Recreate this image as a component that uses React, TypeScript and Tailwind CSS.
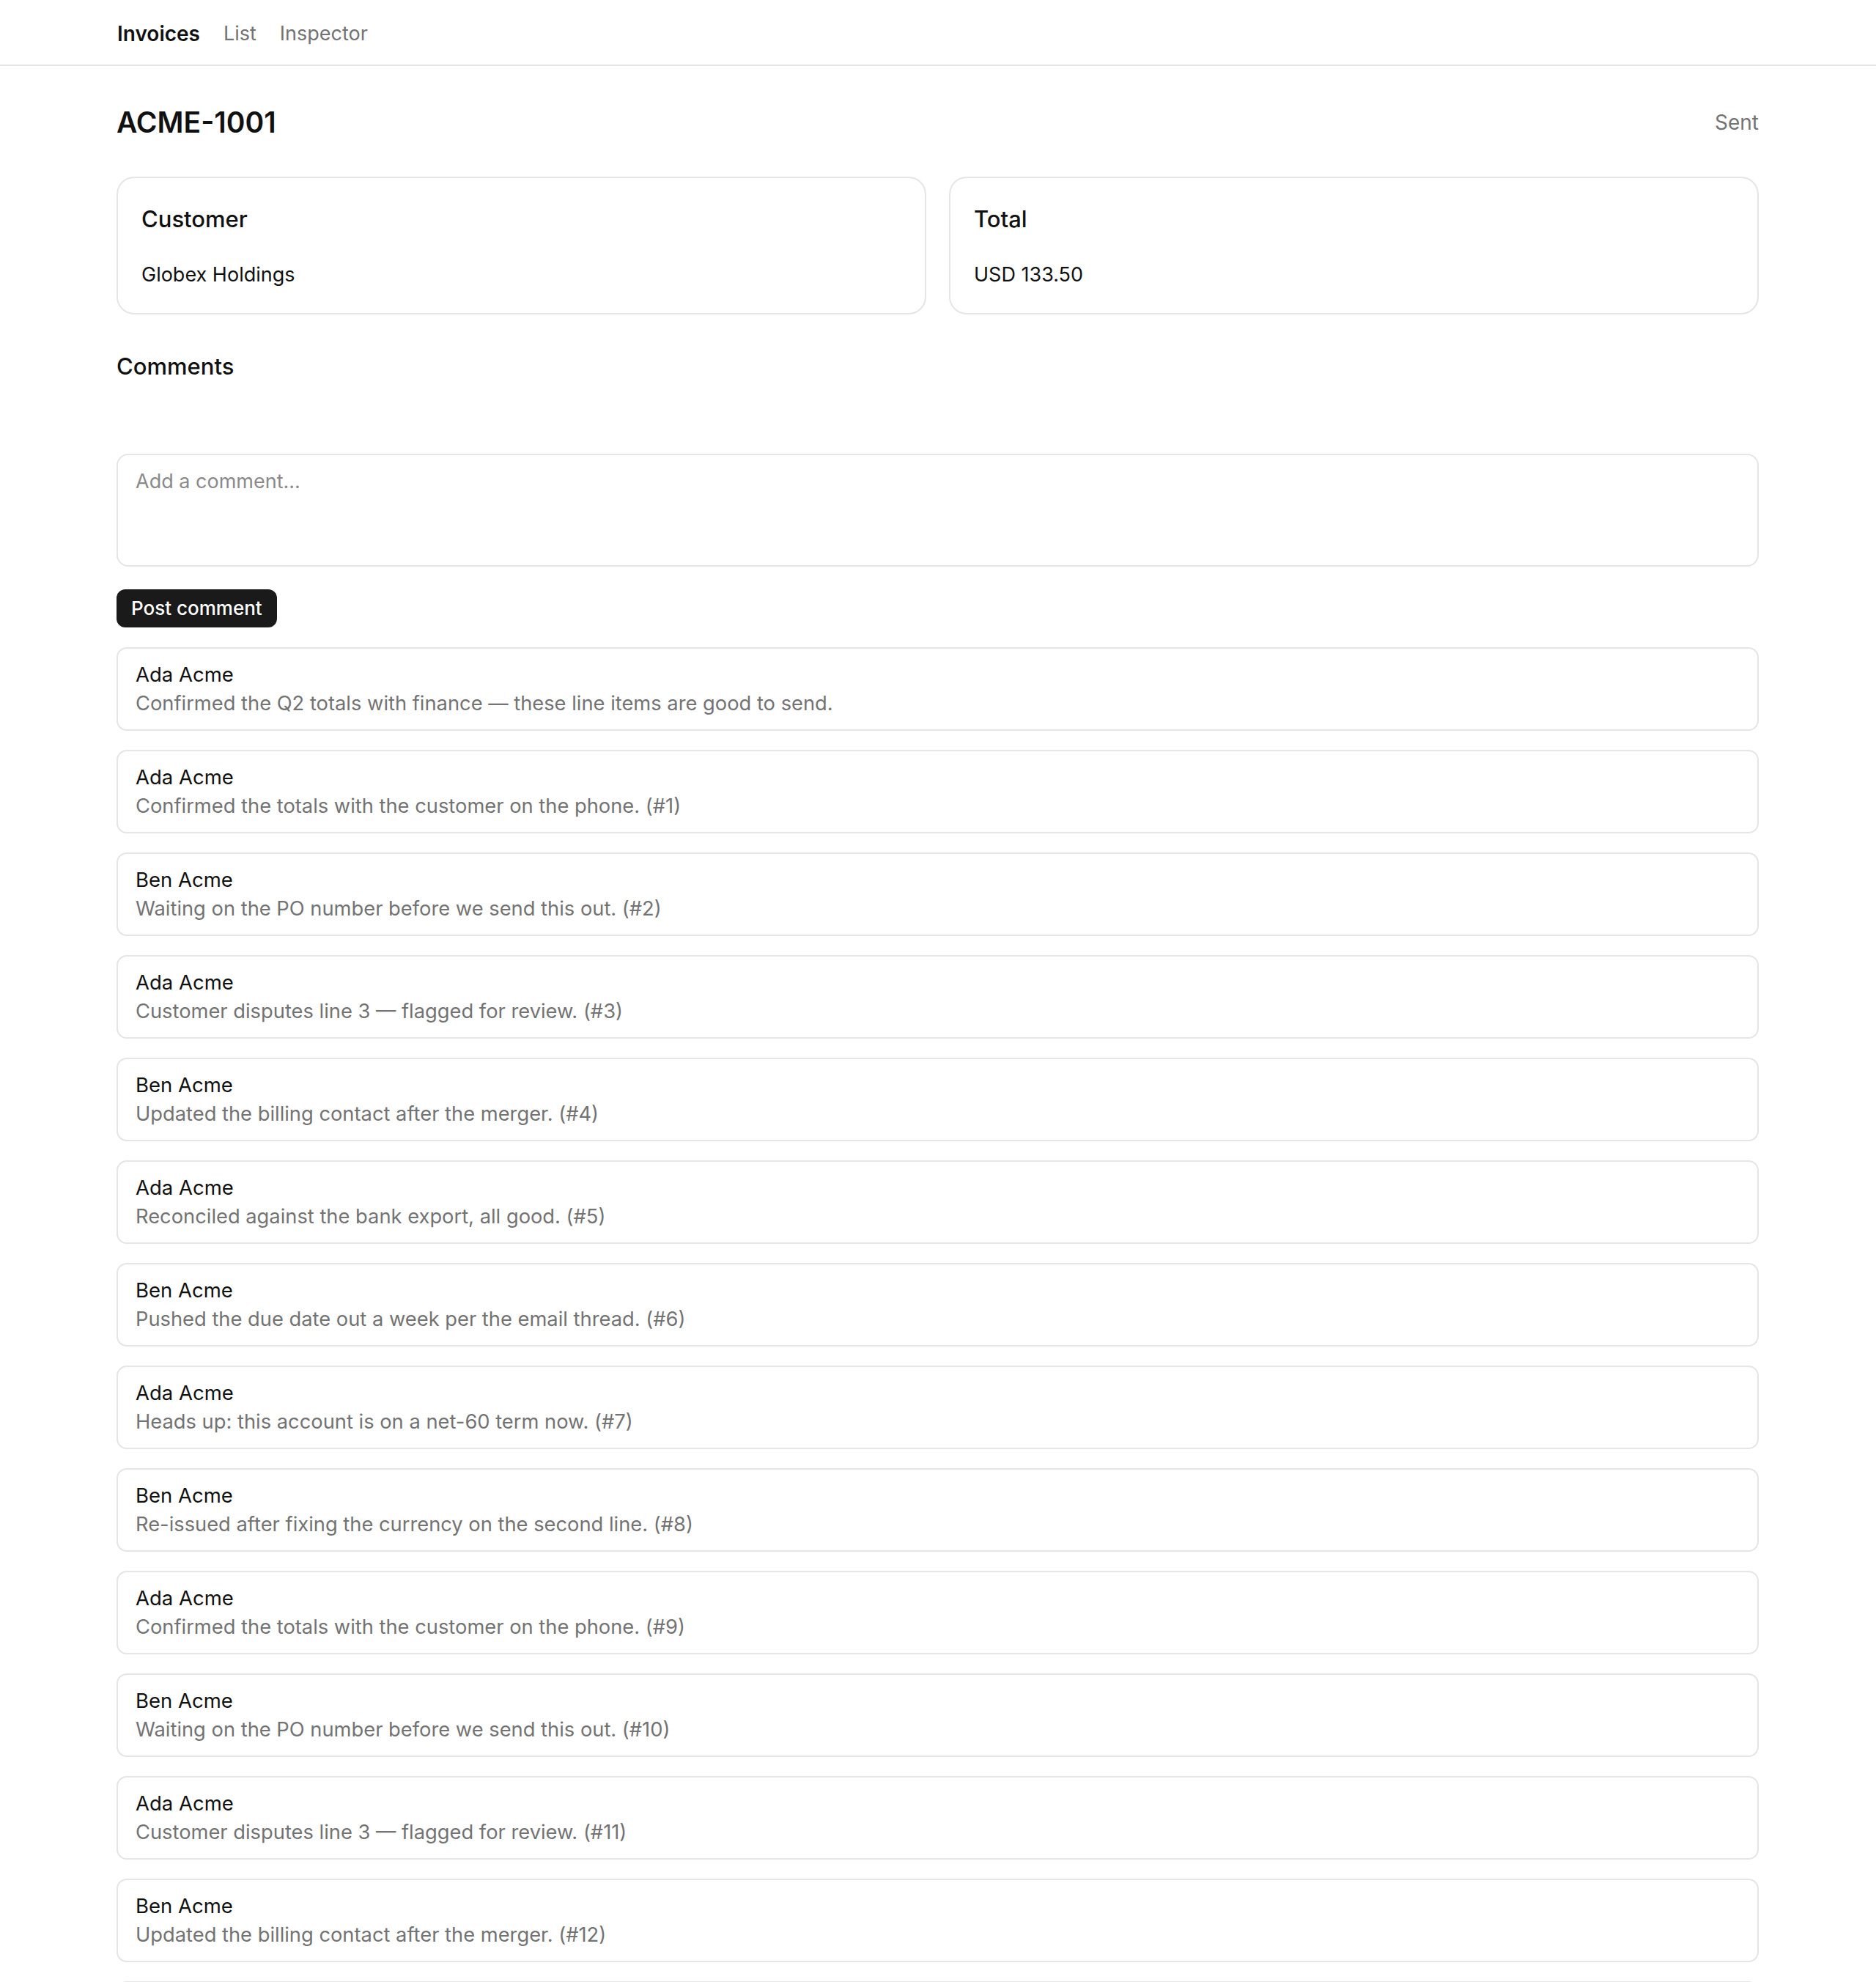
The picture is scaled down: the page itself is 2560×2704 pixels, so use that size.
import React from 'react';

const notes = [
  'Confirmed the totals with the customer on the phone.',
  'Waiting on the PO number before we send this out.',
  'Customer disputes line 3 — flagged for review.',
  'Updated the billing contact after the merger.',
  'Reconciled against the bank export, all good.',
  'Pushed the due date out a week per the email thread.',
  'Heads up: this account is on a net-60 term now.',
  'Re-issued after fixing the currency on the second line.',
];

const comments = [
  { author: 'Ada Acme', body: 'Confirmed the Q2 totals with finance — these line items are good to send.' },
  ...Array.from({ length: 16 }, (_, i) => ({
    author: i % 2 === 0 ? 'Ada Acme' : 'Ben Acme',
    body: `${notes[i % notes.length]} (#${i + 1})`,
  })),
];

function SummaryCard({ label, value }: { label: string; value: string }) {
  return (
    <div className="flex-1 rounded-[24px] border-2 border-[#e5e5e5] p-[32px] flex flex-col gap-[32px]">
      <div className="text-[31px] leading-[48px] font-medium text-[#111]">{label}</div>
      <div className="text-[27px] leading-[40px] text-[#111]">{value}</div>
    </div>
  );
}

export default function App() {
  return (
    <div className="min-h-screen bg-white text-[#111] font-['Inter',sans-serif]">
      <header className="h-[90px] pt-[3px] border-b-2 border-[#e5e5e5] px-[160px] flex items-center gap-[32px] text-[28px] leading-[40px]">
        <span className="font-semibold text-[#111]">Invoices</span>
        <span className="text-[#737373] text-[27px]">List</span>
        <span className="text-[#737373] text-[27px]">Inspector</span>
      </header>

      <main className="pl-[159px] pr-[160px] pt-[49px]">
        <div className="flex items-center justify-between mb-[46px]">
          <h1 className="text-[39px] leading-[56px] font-semibold">ACME-1001</h1>
          <span className="text-[28px] leading-[40px] text-[#737373]">Sent</span>
        </div>

        <div className="flex gap-[31px]">
          <SummaryCard label="Customer" value="Globex Holdings" />
          <SummaryCard label="Total" value="USD 133.50" />
        </div>

        <h2 className="mt-[47px] text-[31px] leading-[48px] font-medium">Comments</h2>

        <textarea
          placeholder="Add a comment..."
          className="mt-[95px] block w-full h-[154px] resize-none rounded-[16px] border-2 border-[#e5e5e5] px-[24px] py-[16px] text-[27px] leading-[40px] placeholder:text-[#8a8a8a] outline-none"
        />

        <button className="mt-[31px] h-[52px] px-[20px] rounded-[12px] bg-[#1a1a1a] text-white text-[26px] leading-[40px] font-medium">
          Post comment
        </button>

        <div className="mt-[27px] flex flex-col gap-[26px] pb-[40px]">
          {comments.map((c, i) => (
            <div key={i} className="rounded-[14px] border-2 border-[#e5e5e5] px-[24px] py-[15px]">
              <div className="text-[27.5px] leading-[40px] text-[#111]">{c.author}</div>
              <div className="text-[27.3px] leading-[40px] text-[#737373]">{c.body}</div>
            </div>
          ))}
        </div>
      </main>
    </div>
  );
}
